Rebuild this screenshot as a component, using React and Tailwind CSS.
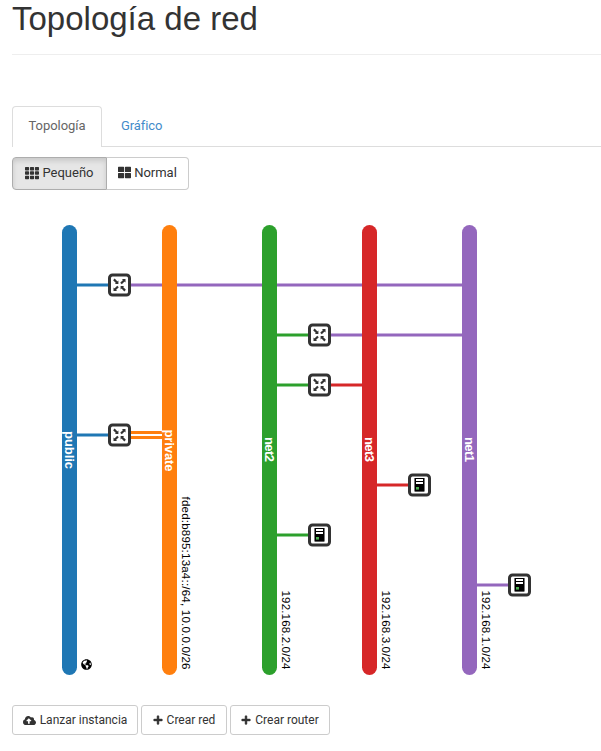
import React from "react";
import { FaCloudUploadAlt, FaPlus, FaTh, FaThLarge, FaGlobeAmericas } from "react-icons/fa";

const networks = [
  { x: 69.5, color: "#1f77b4", name: "public", top: 431, len: 38 },
  { x: 169.5, color: "#ff7f0e", name: "private", top: 429.5, len: 42, cidr: "fded:b895:13a4::/64, 10.0.0.0/26", cidrLen: 173 },
  { x: 269.5, color: "#2ca02c", name: "net2", top: 437, len: 25, cidr: "192.168.2.0/24", cidrLen: 79 },
  { x: 369.5, color: "#d62728", name: "net3", top: 437, len: 25, cidr: "192.168.3.0/24", cidrLen: 79 },
  { x: 469.5, color: "#9467bd", name: "net1", top: 437, len: 25, cidr: "192.168.1.0/24", cidrLen: 79 },
];

const links = [
  [77, 110, 285, "#1f77b4"],
  [130, 470, 285, "#9467bd"],
  [77, 110, 435, "#1f77b4"],
  [130, 170, 432.5, "#ff7f0e"],
  [130, 170, 437.5, "#ff7f0e"],
  [277, 310, 335, "#2ca02c"],
  [330, 470, 335, "#9467bd"],
  [277, 310, 385, "#2ca02c"],
  [330, 370, 385, "#d62728"],
  [377, 410, 485, "#d62728"],
  [277, 310, 535, "#2ca02c"],
  [477, 510, 585, "#9467bd"],
];

const routers = [[119.5, 285], [119.5, 435], [319.5, 335], [319.5, 385]];
const servers = [[419.5, 485], [319.5, 535], [519.5, 585]];

function Box({ children, at }) {
  return (
    <g transform={`translate(${at[0]} ${at[1]})`}>
      <rect x="-10" y="-10" width="20" height="20" rx="3" fill="#fff" stroke="#333" strokeWidth="3" />
      {children}
    </g>
  );
}

function Router({ at }) {
  return (
    <Box at={at}>
      <path d="M-5.6-5.6L-2.3-2.3M1.5-1.5L4.8-4.8M-1.5 1.5L-4.8 4.8M5.6 5.6L2.3 2.3" stroke="#333" strokeWidth="2.2" />
      <path d="M-1.1-4.6v3.5h-3.5zM2.4-6h3.6v3.6zM-6 2.4v3.6h3.6zM1.1 1.1h3.5L1.1 4.6z" fill="#333" />
    </Box>
  );
}

function Server({ at }) {
  return (
    <Box at={at}>
      <rect x="-5.5" y="-7" width="11" height="13.5" fill="#777" />
      <rect x="-4.5" y="-7" width="9" height="13.5" fill="#000" />
      <path d="M-3.5-6h7v2h-7zM-3.5-3h7v2h-7z" fill="#fff" />
      <rect x="-3.5" y="2" width="3" height="2.6" fill="#4caf50" />
    </Box>
  );
}

function Topology() {
  return (
    <svg viewBox="0 190 601 515" className="block h-[515px] w-[601px] shrink-0">
      {links.map(([a, b, y, c], i) => (
        <path key={i} d={`M${a} ${y}H${b}`} stroke={c} strokeWidth="3" />
      ))}
      {networks.map((n) => (
        <rect key={n.name} x={n.x - 7.5} y="225" width="15" height="450" rx="7.5" fill={n.color} />
      ))}
      {networks.map((n) => (
        <g key={n.name}>
          <text transform={`translate(${n.x - 4.5} ${n.top}) rotate(90)`} textLength={n.len} fill="#fff" className="font-['Liberation_Sans',sans-serif] text-[13px] font-bold">
            {n.name}
          </text>
          {n.cidr && (
            <text transform={`translate(${n.x + 12.5} ${669.5 - n.cidrLen}) rotate(90)`} textLength={n.cidrLen} fill="#000" className="font-['Liberation_Sans',sans-serif] text-[11.5px]">
              {n.cidr}
            </text>
          )}
        </g>
      ))}
      <FaGlobeAmericas x="81" y="659" size="11" color="#000" />
      {routers.map((p) => <Router key={p.join()} at={p} />)}
      {servers.map((p) => <Server key={p.join()} at={p} />)}
    </svg>
  );
}

function Action({ icon, label, className }) {
  return (
    <button className={`flex h-[30px] items-center justify-center gap-1 rounded-[3px] border border-[#ccc] bg-white text-[12px] whitespace-nowrap text-[#333] ${className}`}>
      {icon}
      {label}
    </button>
  );
}

export default function App() {
  return (
    <main className="h-[751px] w-[601px] overflow-hidden bg-white font-['Roboto',sans-serif] text-[13px] text-[#333]">
      <header className="ml-3 h-[55px] border-b border-[#eee]">
        <h1 className="font-['Liberation_Sans',sans-serif] text-[33px] leading-[37px] whitespace-nowrap">Topología de red</h1>
      </header>
      <nav className="mt-[51px] flex h-[41px] pl-3">
        <a className="flex w-[90px] items-center justify-center rounded-t border border-b-0 border-[#ddd] pb-0.5 tracking-[-0.05px] text-[#666]">Topología</a>
        <div className="flex flex-1 items-center border-b border-[#ddd] pl-[19px] tracking-[-0.1px] text-[#428bca]">Gráfico</div>
      </nav>
      <div className="mt-2.5 ml-3 flex h-[33px]">
        <button className="flex w-[95px] items-center justify-center gap-[3px] rounded-l border border-[#adadad] bg-[#e6e6e6] pb-0.5 shadow-[inset_0_3px_5px_rgba(0,0,0,0.125)]">
          <FaTh size={14} />
          Pequeño
        </button>
        <button className="flex w-[82px] items-center justify-center gap-[3px] rounded-r border border-l-0 border-[#ccc] pb-0.5">
          <FaThLarge size={13} />
          Normal
        </button>
      </div>
      <Topology />
      <div className="flex gap-[3px] pl-3">
        <Action icon={<FaCloudUploadAlt size={13} />} label="Lanzar instancia" className="w-[126px]" />
        <Action icon={<FaPlus size={10} stroke="currentColor" strokeWidth={25} />} label="Crear red" className="w-[86px]" />
        <Action icon={<FaPlus size={10} stroke="currentColor" strokeWidth={25} />} label="Crear router" className="w-[100px]" />
      </div>
    </main>
  );
}
